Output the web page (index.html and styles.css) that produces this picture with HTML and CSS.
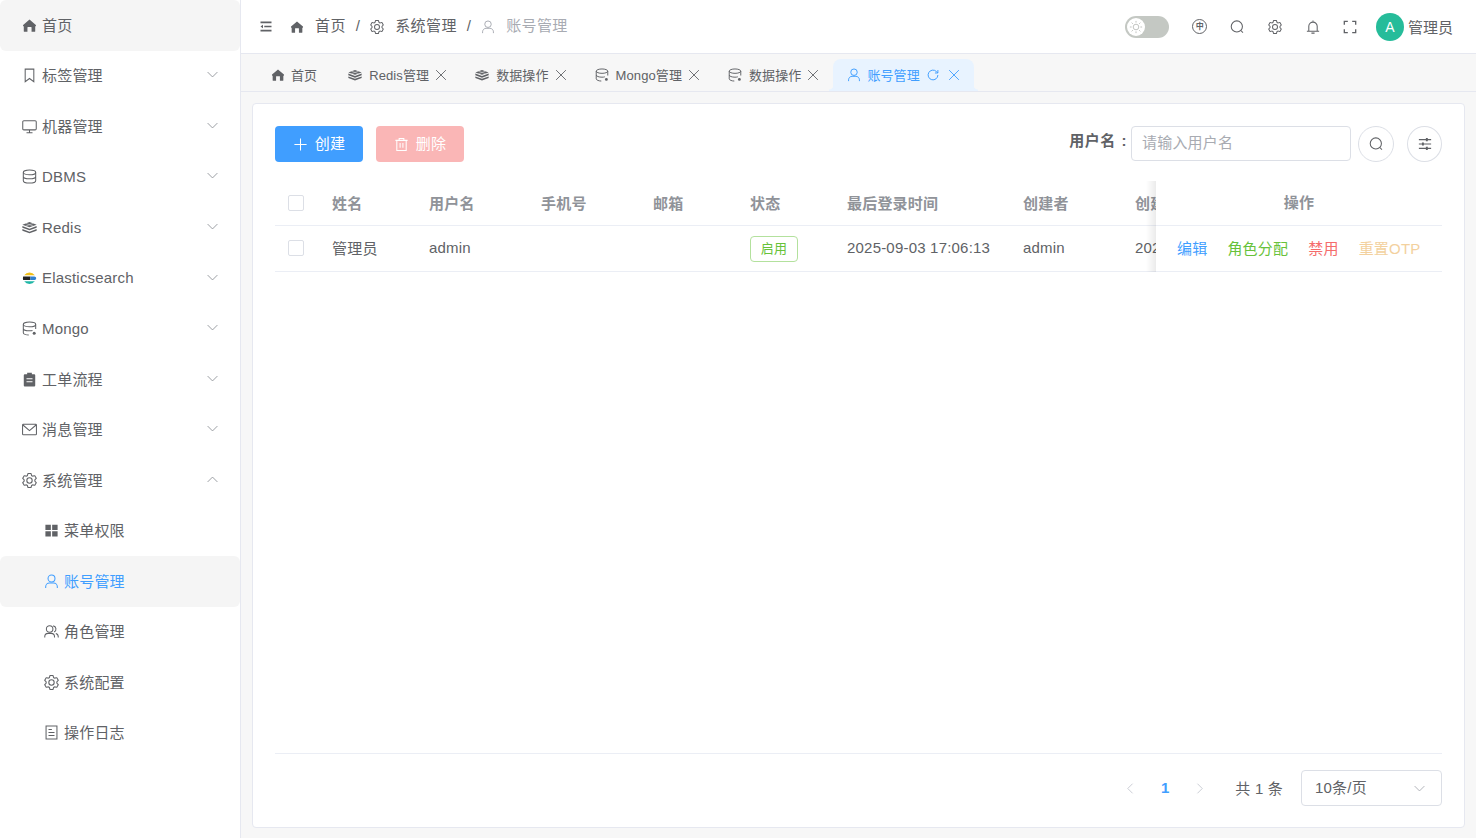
FILE: index.html
```html
<!DOCTYPE html>
<html lang="zh-CN">
<head>
    <meta charset="UTF-8">
    <title>账号管理</title>
    <link rel="stylesheet" href="styles.css">
</head>
<body>
    <svg class="sprite" xmlns="http://www.w3.org/2000/svg">
        <symbol id="i-home" viewBox="0 0 16 16"><path fill="currentColor" d="M8 1.600 1.200 7.400c-.3.3-.2.7.1 1.100l.6.5V14c0 .4.3.7.7.7h3.200V10c0-.3.2-.5.5-.5h3.400c.3 0 .5.2.5.5v4.700h3.200c.4 0 .7-.3.7-.7V9l.6-.5c.3-.4.4-.8.1-1.100z"/></symbol>
        <symbol id="i-bookmark" viewBox="0 0 16 16"><path fill="none" stroke="currentColor" stroke-width="1.100" d="M3.400 1.200h9.200v13.400L8 11.200l-4.600 3.400z"/></symbol>
        <symbol id="i-monitor" viewBox="0 0 16 16"><path fill="none" stroke="currentColor" stroke-width="1.100" d="M2 1.800h12c.7 0 1.200.5 1.200 1.200v7.400c0 .7-.5 1.200-1.200 1.200H2c-.7 0-1.200-.5-1.200-1.200V3c0-.7.5-1.200 1.200-1.200zM8 11.600v2.800M4.800 14.600h6.400"/></symbol>
        <symbol id="i-db" viewBox="0 0 16 16"><g fill="none" stroke="currentColor" stroke-width="1.100"><ellipse cx="8" cy="3.600" rx="6.600" ry="2.500"/><path d="M1.400 3.600v8.800c0 1.400 3 2.500 6.600 2.500s6.600-1.100 6.600-2.500V3.600M1.400 8c0 1.400 3 2.500 6.600 2.500s6.600-1.100 6.600-2.500"/></g></symbol>
        <symbol id="i-mongo" viewBox="0 0 16 16"><g fill="none" stroke="currentColor" stroke-width="1.100"><ellipse cx="8" cy="3.600" rx="6.600" ry="2.500"/><path d="M1.400 3.600v8.800c0 1.400 3 2.500 5.800 2.500M14.600 3.600v5M1.400 8c0 1.400 3 2.500 6.600 2.500 1.200 0 2.300-.1 3.200-.4"/></g><circle cx="13" cy="13" r="1.600" fill="currentColor"/></symbol>
        <symbol id="i-redis" viewBox="0 0 16 16"><g fill="currentColor"><path d="M8 2.200 15.600 5 8 7.800.4 5z"/><path d="M.4 6.400 8 9.200l7.600-2.800v1.900L8 11 .4 8.300z"/><path d="M.4 9.600 8 12.400l7.600-2.800v1.900L8 14.200.4 11.500z"/></g><path fill="none" stroke="#fff" stroke-width=".5" d="M4 3.600l8 2.800M12 3.600 4 6.400"/></symbol>
        <symbol id="i-clipboard" viewBox="0 0 16 16"><path fill="currentColor" fill-rule="evenodd" d="M5.500 .8h5v1.600h2.600c.6 0 1 .4 1 1v11c0 .6-.4 1-1 1H2.900c-.6 0-1-.4-1-1v-11c0-.6.4-1 1-1h2.600zM4.800 6.600v1.200h6.400V6.600zm0 3.200V11h6.400V9.800z"/></symbol>
        <symbol id="i-mail" viewBox="0 0 16 16"><path fill="none" stroke="currentColor" stroke-width="1.100" d="M1.400 2.400h13.200c.4 0 .8.400.8.800v9.600c0 .4-.4.800-.8.800H1.400c-.4 0-.8-.4-.8-.8V3.200c0-.4.400-.8.800-.8zM1 3.200 8 9.200l7-6"/></symbol>
        <symbol id="i-gear" viewBox="64 64 896 896"><path fill="currentColor" d="M600.704 64a32 32 0 0 1 30.464 22.208l35.2 109.376c14.784 7.232 28.928 15.36 42.432 24.512l112.384-24.192a32 32 0 0 1 34.432 15.36L944.32 364.8a32 32 0 0 1-4.032 37.504l-77.12 85.12a357.12 357.12 0 0 1 0 49.024l77.12 85.248a32 32 0 0 1 4.032 37.504l-88.704 153.6a32 32 0 0 1-34.432 15.296L708.8 803.904c-13.44 9.088-27.648 17.28-42.368 24.512l-35.264 109.376A32 32 0 0 1 600.704 960H423.296a32 32 0 0 1-30.464-22.208L357.696 828.48a351.616 351.616 0 0 1-42.56-24.64l-112.32 24.256a32 32 0 0 1-34.432-15.36L79.68 659.2a32 32 0 0 1 4.032-37.504l77.12-85.248a357.12 357.12 0 0 1 0-48.896l-77.12-85.248A32 32 0 0 1 79.68 364.8l88.704-153.6a32 32 0 0 1 34.432-15.296l112.32 24.256c13.568-9.152 27.776-17.408 42.56-24.64l35.2-109.312A32 32 0 0 1 423.232 64H600.64zm-23.424 64H446.72l-36.352 113.088-24.512 11.968a294.113 294.113 0 0 0-34.816 20.096l-22.656 15.36-116.224-25.088-65.28 113.152 79.68 88.192-1.92 27.136a293.12 293.12 0 0 0 0 40.192l1.92 27.136-79.808 88.192 65.344 113.152 116.224-25.024 22.656 15.296a294.113 294.113 0 0 0 34.816 20.096l24.512 11.968L446.72 896h130.688l36.48-113.152 24.448-11.904a288.282 288.282 0 0 0 34.752-20.096l22.592-15.296 116.288 25.024 65.28-113.152-79.744-88.192 1.92-27.136a293.12 293.12 0 0 0 0-40.256l-1.920-27.136 79.808-88.128-65.344-113.152-116.288 24.960-22.592-15.232a287.616 287.616 0 0 0-34.752-20.096l-24.448-11.904L577.344 128zM512 320a192 192 0 1 1 0 384 192 192 0 0 1 0-384zm0 64a128 128 0 1 0 0 256 128 128 0 0 0 0-256z"/></symbol>
        <symbol id="i-grid" viewBox="0 0 16 16"><path fill="currentColor" d="M1.500 1.800h5.800v5.600H1.500zm7.200 0h5.800v5.600H8.700zM1.500 8.800h5.800v5.600H1.500zm7.200 0h5.800v5.600H8.700z"/></symbol>
        <symbol id="i-user" viewBox="0 0 16 16"><g fill="none" stroke="currentColor" stroke-width="1.100"><circle cx="8" cy="4.800" r="3.700"/><path d="M1.800 15v-1.500c0-2.200 1.800-4 4-4h4.400c2.200 0 4 1.800 4 4V15"/></g></symbol>
        <symbol id="i-users" viewBox="0 0 16 16"><g fill="none" stroke="currentColor" stroke-width="1.100"><circle cx="6" cy="5.300" r="3.500"/><path d="M.8 14.500v-.9c0-2 1.600-3.600 3.600-3.600h3.200c2 0 3.600 1.600 3.600 3.600v.9M9.800 2a3.500 3.500 0 0 1 1 6.600M12.600 10.200c1.600.5 2.600 1.800 2.600 3.400v.9"/></g></symbol>
        <symbol id="i-doc" viewBox="0 0 16 16"><path fill="none" stroke="currentColor" stroke-width="1.100" d="M2.200 1h11.600v14H2.200zM4.800 4.800h3.600M4.800 8h6.400M4.800 11.200h6.400"/></symbol>
        <symbol id="i-fold" viewBox="0 0 16 16"><path fill="none" stroke="currentColor" stroke-width="2.200" d="M0 2h16M5.500 8H16M0 14h16"/><path fill="currentColor" d="M0 8l3.600-2.700v5.400z"/></symbol>
        <symbol id="i-search" viewBox="0 0 16 16"><g fill="none" stroke="currentColor" stroke-width="1.200"><circle cx="7.800" cy="7.400" r="6.400"/><path d="M12.400 12l2.400 2.400"/></g></symbol>
        <symbol id="i-bell" viewBox="0 0 16 16"><path fill="none" stroke="currentColor" stroke-width="1.200" d="M8 .6v1.800M3.200 12.800V7.200a4.800 4.800 0 0 1 9.600 0v5.600M1 12.800h14M6.200 15h3.600"/></symbol>
        <symbol id="i-full" viewBox="0 0 16 16"><path fill="none" stroke="currentColor" stroke-width="1.500" d="M1.500 5.500v-4h4M10.500 1.500h4v4M14.500 10.500v4h-4M5.500 14.500h-4v-4"/></symbol>
        <symbol id="i-sun" viewBox="0 0 16 16"><g fill="none" stroke="currentColor" stroke-width="1"><circle cx="8" cy="8" r="3.200"/><path d="M8 1v2M8 13v2M1 8h2M13 8h2M3 3l1.400 1.400M11.600 11.600 13 13M3 13l1.400-1.400M11.600 4.400 13 3"/></g></symbol>
        <symbol id="i-plus" viewBox="0 0 16 16"><path fill="none" stroke="currentColor" stroke-width="1.100" d="M8 1.500v13M1.500 8h13"/></symbol>
        <symbol id="i-trash" viewBox="0 0 16 16"><path fill="none" stroke="currentColor" stroke-width="1.100" d="M1.500 3.600h13M5.500 3.600V1.500h5v2.100M3 3.600v10.900h10V3.600M6.500 6.500v5M9.500 6.500v5"/></symbol>
        <symbol id="i-close" viewBox="0 0 16 16"><path fill="none" stroke="currentColor" stroke-width="1.200" d="M1.500 1.500l13 13M14.500 1.500l-13 13"/></symbol>
        <symbol id="i-refresh" viewBox="0 0 16 16"><path fill="none" stroke="currentColor" stroke-width="1.300" d="M14.500 8a6.500 6.500 0 1 1-2-4.700l2 2M14.500 1.400v3.900h-3.900"/></symbol>
        <symbol id="i-down" viewBox="0 0 16 16"><path fill="none" stroke="currentColor" stroke-width="1.100" d="M2 5l6 6 6-6"/></symbol>
        <symbol id="i-up" viewBox="0 0 16 16"><path fill="none" stroke="currentColor" stroke-width="1.100" d="M2 11l6-6 6 6"/></symbol>
        <symbol id="i-left" viewBox="0 0 16 16"><path fill="none" stroke="currentColor" stroke-width="1.200" d="M11 1 4 8l7 7"/></symbol>
        <symbol id="i-right" viewBox="0 0 16 16"><path fill="none" stroke="currentColor" stroke-width="1.200" d="M5 1l7 7-7 7"/></symbol>
        <symbol id="i-sliders" viewBox="0 0 16 16"><g fill="none" stroke="currentColor" stroke-width="1.200"><path d="M1 3h14M1 8h14M1 13h14"/></g><path fill="currentColor" d="M9 1.200h2.200v3.600H9zM4.500 6.200h2.200v3.600H4.500zM9 11.200h2.200v3.600H9z"/></symbol>
    </svg>

    <div class="layout">
        <aside class="sidebar">
            <a class="menu-item is-open"><svg class="ico"><use href="#i-home"/></svg><span>首页</span></a>
            <a class="menu-item"><svg class="ico"><use href="#i-bookmark"/></svg><span>标签管理</span><svg class="arrow"><use href="#i-down"/></svg></a>
            <a class="menu-item"><svg class="ico"><use href="#i-monitor"/></svg><span>机器管理</span><svg class="arrow"><use href="#i-down"/></svg></a>
            <a class="menu-item"><svg class="ico"><use href="#i-db"/></svg><span class="en">DBMS</span><svg class="arrow"><use href="#i-down"/></svg></a>
            <a class="menu-item"><svg class="ico"><use href="#i-redis"/></svg><span class="en">Redis</span><svg class="arrow"><use href="#i-down"/></svg></a>
            <a class="menu-item">
                <svg class="ico" viewBox="0 0 16 16">
                    <path fill="#f0bf1a" d="M2.300 4.400A7.200 7.200 0 0 1 13.700 4.400z"/>
                    <path fill="#222" d="M1.200 5.800H9v3.800H1.200A7.200 7.200 0 0 1 1.200 5.800z"/>
                    <path fill="#2f7fd1" d="M9 5.800h4.200c1.100 0 1.900.9 1.900 1.900s-.8 1.900-1.900 1.900H9z"/>
                    <path fill="#1fb6a6" d="M2.300 11h11.400A7.200 7.200 0 0 1 2.300 11z"/>
                </svg>
                <span>Elasticsearch</span><svg class="arrow"><use href="#i-down"/></svg>
            </a>
            <a class="menu-item"><svg class="ico"><use href="#i-mongo"/></svg><span class="en">Mongo</span><svg class="arrow"><use href="#i-down"/></svg></a>
            <a class="menu-item"><svg class="ico"><use href="#i-clipboard"/></svg><span>工单流程</span><svg class="arrow"><use href="#i-down"/></svg></a>
            <a class="menu-item"><svg class="ico"><use href="#i-mail"/></svg><span>消息管理</span><svg class="arrow"><use href="#i-down"/></svg></a>
            <a class="menu-item"><svg class="ico"><use href="#i-gear"/></svg><span>系统管理</span><svg class="arrow"><use href="#i-up"/></svg></a>
            <a class="menu-item sub"><svg class="ico"><use href="#i-grid"/></svg><span>菜单权限</span></a>
            <a class="menu-item sub active"><svg class="ico"><use href="#i-user"/></svg><span>账号管理</span></a>
            <a class="menu-item sub"><svg class="ico"><use href="#i-users"/></svg><span>角色管理</span></a>
            <a class="menu-item sub"><svg class="ico"><use href="#i-gear"/></svg><span>系统配置</span></a>
            <a class="menu-item sub"><svg class="ico"><use href="#i-doc"/></svg><span>操作日志</span></a>
        </aside>

        <div class="main">
            <header class="topbar">
                <svg class="fold"><use href="#i-fold"/></svg>
                <nav class="crumbs">
                    <svg class="ico"><use href="#i-home"/></svg><span class="crumb">首页</span><i class="sep">/</i>
                    <svg class="ico"><use href="#i-gear"/></svg><span class="crumb">系统管理</span><i class="sep">/</i>
                    <svg class="ico last"><use href="#i-user"/></svg><span class="crumb last">账号管理</span>
                </nav>
                <div class="tools">
                    <div class="theme-switch"><span class="knob"><svg><use href="#i-sun"/></svg></span></div>
                    <div class="tool"><span class="lang">中</span></div>
                    <div class="tool"><svg><use href="#i-search"/></svg></div>
                    <div class="tool"><svg><use href="#i-gear"/></svg></div>
                    <div class="tool"><svg><use href="#i-bell"/></svg></div>
                    <div class="tool"><svg><use href="#i-full"/></svg></div>
                    <div class="user"><span class="avatar">A</span><span class="user-name">管理员</span></div>
                </div>
            </header>

            <div class="tabs">
                <div class="tab first"><svg class="ico"><use href="#i-home"/></svg><span>首页</span></div>
                <div class="tab"><svg class="ico"><use href="#i-redis"/></svg><span>Redis管理</span><svg class="x"><use href="#i-close"/></svg></div>
                <div class="tab"><svg class="ico"><use href="#i-redis"/></svg><span>数据操作</span><svg class="x"><use href="#i-close"/></svg></div>
                <div class="tab"><svg class="ico"><use href="#i-mongo"/></svg><span>Mongo管理</span><svg class="x"><use href="#i-close"/></svg></div>
                <div class="tab"><svg class="ico"><use href="#i-mongo"/></svg><span>数据操作</span><svg class="x"><use href="#i-close"/></svg></div>
                <div class="tab active"><svg class="ico"><use href="#i-user"/></svg><span>账号管理</span><svg class="x reload"><use href="#i-refresh"/></svg><svg class="x"><use href="#i-close"/></svg></div>
            </div>

            <section class="content">
                <div class="card">
                    <div class="toolbar">
                        <button class="btn primary"><svg><use href="#i-plus"/></svg><span>创建</span></button>
                        <button class="btn danger"><svg><use href="#i-trash"/></svg><span>删除</span></button>
                        <div class="search">
                            <label class="search-label">用户名 :</label>
                            <div class="search-input">请输入用户名</div>
                            <button class="round"><svg><use href="#i-search"/></svg></button>
                            <button class="round"><svg><use href="#i-sliders"/></svg></button>
                        </div>
                    </div>

                    <div class="table-wrap">
                        <div class="table-scroll">
                            <table class="grid">
                                <colgroup>
                                    <col class="c-check"><col class="c-name"><col class="c-user"><col class="c-phone"><col class="c-mail">
                                    <col class="c-status"><col class="c-login"><col class="c-creator"><col class="c-created">
                                </colgroup>
                                <thead>
                                    <tr><th><span class="check"></span></th><th>姓名</th><th>用户名</th><th>手机号</th><th>邮箱</th><th>状态</th><th>最后登录时间</th><th>创建者</th><th>创建时间</th></tr>
                                </thead>
                                <tbody>
                                    <tr>
                                        <td><span class="check"></span></td><td>管理员</td><td class="en">admin</td><td></td><td></td>
                                        <td class="status"><span class="tag">启用</span></td>
                                        <td class="en">2025-09-03 17:06:13</td><td class="en">admin</td><td class="en">202</td>
                                    </tr>
                                </tbody>
                            </table>
                        </div>
                        <div class="table-fixed">
                            <div class="fixed-head">操作</div>
                            <div class="fixed-row">
                                <a class="link blue">编辑</a>
                                <a class="link green">角色分配</a>
                                <a class="link red">禁用</a>
                                <a class="link amber">重置OTP</a>
                            </div>
                        </div>
                    </div>

                    <div class="pager">
                        <svg class="nav"><use href="#i-left"/></svg>
                        <span class="page">1</span>
                        <svg class="nav"><use href="#i-right"/></svg>
                        <span class="total">共 1 条</span>
                        <div class="size"><span>10条/页</span><svg><use href="#i-down"/></svg></div>
                    </div>
                </div>
            </section>
        </div>
    </div>
</body>
</html>
```

FILE: styles.css
```css
* {
    box-sizing: border-box;
}
html, body {
    margin: 0;
    height: 100%;
    overflow: hidden;
}
body {
    font-family: "Liberation Sans", "Noto Sans CJK SC", sans-serif;
    font-size: 15px;
    letter-spacing: 0.2px;
    color: #606266;
    background: #fff;
}
.sprite {
    display: none;
}
.layout {
    display: flex;
    height: 100%;
}

/* sidebar */
.sidebar {
    width: 241px;
    flex: none;
    border-right: 1px solid #e6e8f0;
}
.menu-item {
    display: flex;
    align-items: center;
    height: 50.55px;
    padding: 0 21px 0 22px;
    border-radius: 6px;
}
.menu-item.is-open {
    background: #f5f5f5;
}
.menu-item span {
    padding-bottom: 2px;
}
.menu-item span.en {
    padding-bottom: 0;
}
.menu-item .ico {
    width: 15px;
    height: 15px;
    margin-right: 5px;
    flex: none;
}
.menu-item .arrow {
    width: 13px;
    height: 13px;
    margin-left: auto;
    margin-bottom: 2px;
    color: #909399;
}
.menu-item.sub {
    padding-left: 44px;
}
.menu-item.active {
    background: #f5f5f5;
    color: #409eff;
}

/* header */
.main {
    flex: 1;
    min-width: 0;
    display: flex;
    flex-direction: column;
    background: #f7f7f7;
}
.topbar {
    display: flex;
    align-items: center;
    height: 54px;
    padding: 0 23px 0 19px;
    background: #fff;
    border-bottom: 1px solid #e6e8f0;
}
.fold {
    width: 12px;
    height: 11px;
    margin-right: 18px;
}
.crumbs {
    display: flex;
    align-items: center;
}
.crumb {
    padding-bottom: 4px;
    letter-spacing: 0.4px;
}
.sep {
    padding-bottom: 3px;
    font-style: normal;
    margin: 0 10px;
}
.crumbs .ico {
    width: 14px;
    height: 14px;
    margin-right: 11px;
}
.crumbs .ico.last, .crumb.last {
    color: #a8abb2;
}
.tools {
    margin-left: auto;
    display: flex;
    align-items: center;
}
.theme-switch {
    width: 44px;
    height: 22px;
    border-radius: 11px;
    background: #c4c8c3;
    padding: 2px;
    margin-right: 12px;
}
.knob {
    display: flex;
    align-items: center;
    justify-content: center;
    width: 18px;
    height: 18px;
    border-radius: 50%;
    background: #fff;
    color: #b9bcb8;
}
.knob svg {
    width: 14px;
    height: 14px;
}
.tool {
    width: 37.6px;
    display: flex;
    justify-content: center;
    align-items: center;
}
.tool svg {
    width: 14px;
    height: 14px;
}
.lang {
    width: 15px;
    height: 15px;
    border: 1px solid #606266;
    border-radius: 50%;
    font-size: 8px;
    font-weight: bold;
    letter-spacing: 0;
    line-height: 13px;
    text-align: center;
}
.user {
    display: flex;
    align-items: center;
    margin-left: 7px;
}
.user-name {
    padding-bottom: 1px;
    letter-spacing: 0;
}
.avatar {
    width: 28px;
    height: 28px;
    margin-right: 4px;
    border-radius: 50%;
    background: #26bc9a;
    color: #fff;
    font-size: 14px;
    line-height: 28px;
    text-align: center;
}

/* tabs */
.tabs {
    display: flex;
    align-items: flex-end;
    height: 38px;
    padding-left: 16px;
    background: #f7f7f7;
    border-bottom: 1px solid #e6e8f0;
    font-size: 13px;
    letter-spacing: 0.1px;
}
.tab {
    position: relative;
    display: flex;
    align-items: center;
    height: 32px;
    padding: 0 14px;
    border-radius: 8px 8px 0 0;
}
.tab span {
    padding-bottom: 2px;
}
.tab.first {
    padding-right: 17px;
}
.tab .ico {
    width: 14px;
    height: 14px;
    margin-right: 7px;
}
.tab.first .ico, .tab.active .ico {
    margin-right: 6px;
}
.tab .x {
    width: 12px;
    height: 12px;
    margin-left: 6px;
}
.tab .x.reload {
    width: 12px;
    height: 12px;
    margin-left: 7px;
    margin-right: 3px;
}
.tab.active {
    background: #e8f3ff;
    color: #409eff;
}
.tab.active::before, .tab.active::after {
    content: "";
    position: absolute;
    bottom: 0;
    width: 4px;
    height: 6px;
}
.tab.active::before {
    left: -4px;
    background: radial-gradient(circle at 0 0, transparent 4px, #e8f3ff 5px);
}
.tab.active::after {
    right: -4px;
    background: radial-gradient(circle at 100% 0, transparent 4px, #e8f3ff 5px);
}

/* card */
.content {
    flex: 1;
    min-height: 0;
    padding: 11px 11px 10px;
}
.card {
    height: 100%;
    display: flex;
    flex-direction: column;
    padding: 22px 22px 21px;
    background: #fff;
    border: 1px solid #e6e8f0;
    border-radius: 4px;
}
.toolbar {
    display: flex;
    align-items: center;
    height: 36px;
    margin-bottom: 19px;
}
.btn {
    display: flex;
    align-items: center;
    justify-content: center;
    width: 88px;
    height: 36px;
    margin-right: 13px;
    border: 0;
    border-radius: 4px;
    color: #fff;
    font: inherit;
    letter-spacing: inherit;
}
.btn span {
    padding-bottom: 3px;
}
.btn svg {
    width: 15px;
    height: 15px;
    margin-right: 7px;
}
.btn.primary {
    background: #409eff;
}
.btn.danger {
    background: #fab6b6;
}
.search {
    margin-left: auto;
    display: flex;
    align-items: center;
}
.search-label {
    font-weight: bold;
    letter-spacing: 0.5px;
    word-spacing: 1px;
    margin-right: 4px;
    margin-bottom: 9px;
}
.search-input {
    width: 220px;
    height: 35px;
    padding: 0 10px;
    margin-right: 7px;
    margin-bottom: 1px;
    border: 1px solid #dcdfe6;
    border-radius: 4px;
    color: #a8abb2;
    line-height: 32px;
}
.round {
    display: flex;
    align-items: center;
    justify-content: center;
    width: 36px;
    height: 36px;
    padding: 0;
    border: 1px solid #dcdfe6;
    border-radius: 50%;
    background: #fff;
    color: #606266;
}
.round + .round {
    width: 35px;
    margin-left: 13px;
}
.round svg {
    width: 14px;
    height: 14px;
}

/* table */
.table-wrap {
    flex: 1;
    min-height: 0;
    display: flex;
    border-bottom: 1px solid #ebeef5;
}
.table-scroll {
    flex: 1;
    min-width: 0;
    overflow: hidden;
}
.grid {
    width: 1018px;
    table-layout: fixed;
    border-collapse: collapse;
}
.c-check { width: 45px; }
.c-name { width: 97px; }
.c-user { width: 112px; }
.c-phone { width: 112px; }
.c-mail { width: 97px; }
.c-status { width: 97px; }
.c-login { width: 176px; }
.c-creator { width: 112px; }
.c-created { width: 170px; }
.grid th, .grid td {
    padding: 0 0 0 12px;
    border-bottom: 1px solid #ebeef5;
    text-align: left;
    white-space: nowrap;
    overflow: hidden;
}
.grid th {
    height: 44px;
    padding-bottom: 1px;
    color: #909399;
    font-weight: bold;
}
.grid td {
    height: 46px;
    padding-bottom: 2px;
}
.grid td.en {
    padding-bottom: 1px;
}
.grid th:first-child, .grid td:first-child {
    padding: 0 0 0 13px;
}
.grid td.status {
    padding: 1px 0 0 12px;
}
.check {
    display: block;
    width: 16px;
    height: 16px;
    border: 1px solid #dcdfe6;
    border-radius: 2px;
    background: #fff;
}
.tag {
    display: inline-block;
    width: 48px;
    height: 26px;
    border: 1px solid #b3e19d;
    border-radius: 4px;
    color: #67c23a;
    font-size: 13px;
    line-height: 24px;
    text-align: center;
    vertical-align: middle;
}
.table-fixed {
    position: relative;
    width: 286px;
    flex: none;
    background: #fff;
}
.table-fixed::before {
    content: "";
    position: absolute;
    top: 0;
    left: -10px;
    width: 10px;
    height: 91px;
    background: linear-gradient(to left, rgba(0, 0, 0, 0.08), rgba(0, 0, 0, 0));
}
.fixed-head {
    height: 45px;
    line-height: 44px;
    text-align: center;
    color: #909399;
    font-weight: bold;
    border-bottom: 1px solid #ebeef5;
}
.fixed-row {
    display: flex;
    align-items: center;
    gap: 20px;
    height: 46px;
    padding: 0 0 2px 21px;
    border-bottom: 1px solid #ebeef5;
}
.link.blue { color: #409eff; }
.link.green { color: #67c23a; }
.link.red { color: #f56c6c; }
.link.amber { color: #f3d19e; }

/* pager */
.pager {
    display: flex;
    align-items: center;
    justify-content: flex-end;
    padding-top: 16px;
    flex: none;
}
.nav {
    width: 11px;
    height: 11px;
    color: #c0c4cc;
}
.page {
    width: 58px;
    padding-bottom: 2px;
    text-align: center;
    font-weight: bold;
    color: #409eff;
}
.total {
    padding-bottom: 2px;
    margin: 0 18px 0 30px;
}
.size {
    display: flex;
    align-items: center;
    justify-content: space-between;
    width: 141px;
    height: 36px;
    padding: 0 15px 0 13px;
    border: 1px solid #dcdfe6;
    border-radius: 4px;
}
.size span {
    padding-bottom: 4px;
}
.size svg {
    width: 13px;
    height: 13px;
    color: #a8abb2;
}
```
